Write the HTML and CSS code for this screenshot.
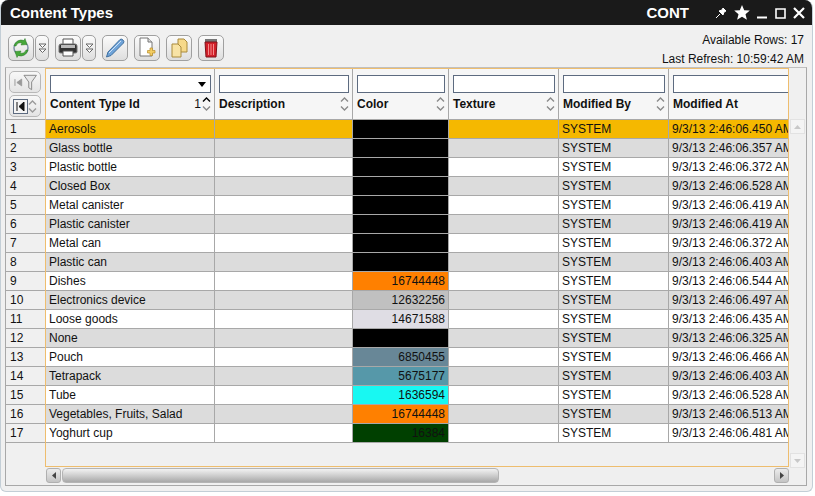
FILE: index.html
```html
<!DOCTYPE html>
<html lang="en">
<head>
    <meta charset="UTF-8">
    <title>Content Types</title>
    <link rel="stylesheet" href="styles.css">
</head>
<body>
    <svg class="defs" width="0" height="0">
        <symbol id="chev-up" viewBox="0 0 9 5"><path d="M1 4.5 4.5 1 8 4.5" fill="none" stroke="currentColor" stroke-width="1.4"/></symbol>
        <symbol id="chev-down" viewBox="0 0 9 5"><path d="M1 .5 4.5 4 8 .5" fill="none" stroke="currentColor" stroke-width="1.4"/></symbol>
        <symbol id="double-down" viewBox="0 0 9 10"><path d="M1 1h7L4.500 4.500zM1 6h7L4.500 9.500z" fill="#fff" stroke="#666"/></symbol>
    </svg>

    <div class="window">
        <!-- Title bar -->
        <div class="titlebar">
            <span class="title">Content Types</span>
            <span class="title-code">CONT</span>
            <div class="window-icons">
                <svg width="12" height="12" viewBox="0 0 12 12"><path d="M1 11 5 7M4 4l4 4 1-3 2-1-3-3-1 2z" fill="#fff" stroke="#fff"/></svg>
                <svg width="16" height="15" viewBox="0 0 16 15"><path d="M8 0l2.200 5.200 5.600.4-4.300 3.600 1.400 5.500L8 11.700l-4.900 3 1.400-5.500L.2 5.600l5.600-.4z" fill="#fff"/></svg>
                <svg width="11" height="12" viewBox="0 0 11 12"><path d="M0 9.500h10v2H0z" fill="#fff"/></svg>
                <svg width="11" height="12" viewBox="0 0 11 12"><path d="M1 2h9v9H1z" fill="none" stroke="#fff" stroke-width="1.600"/></svg>
                <svg width="12" height="12" viewBox="0 0 12 12"><path d="M1 1l10 10M11 1 1 11" fill="none" stroke="#fff" stroke-width="2.200"/></svg>
            </div>
        </div>

        <!-- Toolbar -->
        <div class="toolbar">
            <div class="tool-buttons">
                <button class="tool">
                    <svg width="22" height="22" viewBox="0 0 22 22"><circle cx="11" cy="11" r="7" fill="none" stroke="#7d8fa6" stroke-width="1.500"/><path d="M4 9a7.500 7.500 0 0 1 10-5.500l1-2 2 6-6 .5 1-2a5 5 0 0 0-6 3z" fill="#46a83a" stroke="#2a7a24" stroke-width=".5"/><path d="M18 13a7.500 7.500 0 0 1-10 5.500l-1 2-2-6 6-.5-1 2a5 5 0 0 0 6-3z" fill="#46a83a" stroke="#2a7a24" stroke-width=".5"/></svg>
                </button>
                <button class="tool-more"><svg width="9" height="10"><use href="#double-down"/></svg></button>
                <button class="tool tool-gap">
                    <svg width="22" height="20" viewBox="0 0 22 20"><path d="M6 1h10v6H6z" fill="#fff" stroke="#555"/><path d="M2 8q0-2 2-2h14q2 0 2 2v6q0 1-2 1H4q-2 0-2-1z" fill="#333" stroke="#777"/><path d="M4 7h14v3H4z" fill="#bbb"/><path d="M6 13h10v5H6z" fill="#fff" stroke="#555"/></svg>
                </button>
                <button class="tool-more"><svg width="9" height="10"><use href="#double-down"/></svg></button>
                <button class="tool tool-gap">
                    <svg width="22" height="22" viewBox="0 0 22 22"><path d="M4 15 16 2.500q1.500-1 3 .5t.5 3L7 18.500l-4.500 1.500z" fill="#6fa3d8" stroke="#3f6f9f"/><path d="M5 16 17 4" stroke="#cfe2f5" fill="none"/></svg>
                </button>
                <button class="tool tool-gap">
                    <svg width="20" height="22" viewBox="0 0 20 22"><path d="M3 1h8l4 4v14H3z" fill="#fff" stroke="#777"/><path d="M11 1v4h4" fill="#ddd" stroke="#777"/><path d="M13 11h2.500v2.500H18V16h-2.500v2.500H13V16h-2.500v-2.500H13z" fill="#f3cd63" stroke="#b98e2a" stroke-width=".7"/></svg>
                </button>
                <button class="tool tool-gap">
                    <svg width="20" height="20" viewBox="0 0 20 20"><path d="M9 1h6l3 3v10H9z" fill="#f6d98a" stroke="#a98a3d"/><path d="M3 6h6l3 3v10H3z" fill="#f8e3a5" stroke="#a98a3d"/></svg>
                </button>
                <button class="tool tool-gap">
                    <svg width="18" height="22" viewBox="0 0 18 22"><path d="M3 2h12v3H3z" fill="#777"/><path d="M3 5h12l-1 15H4z" fill="#d2202a" stroke="#7d1118"/><path d="M6.500 7v11M9 7v11M11.500 7v11" stroke="#f58a8a" fill="none"/></svg>
                </button>
            </div>
            <div class="status">
                <div>Available Rows: 17</div>
                <div>Last Refresh: 10:59:42 AM</div>
            </div>
        </div>

        <!-- Grid -->
        <div class="grid">
            <div class="index-col">
                <div class="index-head">
                    <div class="index-btn">
                        <svg width="9" height="9" viewBox="0 0 9 9"><path d="M1 1v7M8 1v7L3 4.500z" fill="#999" stroke="#999"/></svg>
                        <svg width="15" height="17" viewBox="0 0 15 17"><path d="M1 1h13L9 8v8l-3-2V8z" fill="#e8e8e8" stroke="#888"/></svg>
                    </div>
                    <div class="index-btn">
                        <span class="first-box"><svg width="9" height="9" viewBox="0 0 9 9"><path d="M1 0v9M8 0v9L3 4.500z" fill="#111" stroke="#111"/></svg></span>
                        <span class="sort sort-light"><svg width="9" height="5"><use href="#chev-up"/></svg><svg width="9" height="5"><use href="#chev-down"/></svg></span>
                    </div>
                </div>
                <div class="index-cell">1</div>
                <div class="index-cell">2</div>
                <div class="index-cell">3</div>
                <div class="index-cell">4</div>
                <div class="index-cell">5</div>
                <div class="index-cell">6</div>
                <div class="index-cell">7</div>
                <div class="index-cell">8</div>
                <div class="index-cell">9</div>
                <div class="index-cell">10</div>
                <div class="index-cell">11</div>
                <div class="index-cell">12</div>
                <div class="index-cell">13</div>
                <div class="index-cell">14</div>
                <div class="index-cell">15</div>
                <div class="index-cell">16</div>
                <div class="index-cell">17</div>
            </div>

            <div class="data">
                <table>
                    <colgroup>
                        <col class="c-id"><col class="c-desc"><col class="c-color"><col class="c-texture"><col class="c-by"><col class="c-at">
                    </colgroup>
                    <thead>
                        <tr>
                            <th>
                                <div class="filter-box"><i class="caret"></i></div>
                                <div class="head-label">Content Type Id<span class="sort-num">1</span><span class="sort sort-active"><svg width="9" height="5"><use href="#chev-up"/></svg><svg width="9" height="5" class="dim"><use href="#chev-down"/></svg></span></div>
                            </th>
                            <th>
                                <div class="filter-box"></div>
                                <div class="head-label">Description<span class="sort"><svg width="9" height="5"><use href="#chev-up"/></svg><svg width="9" height="5"><use href="#chev-down"/></svg></span></div>
                            </th>
                            <th>
                                <div class="filter-box"></div>
                                <div class="head-label">Color<span class="sort"><svg width="9" height="5"><use href="#chev-up"/></svg><svg width="9" height="5"><use href="#chev-down"/></svg></span></div>
                            </th>
                            <th>
                                <div class="filter-box"></div>
                                <div class="head-label">Texture<span class="sort"><svg width="9" height="5"><use href="#chev-up"/></svg><svg width="9" height="5"><use href="#chev-down"/></svg></span></div>
                            </th>
                            <th>
                                <div class="filter-box"></div>
                                <div class="head-label">Modified By<span class="sort"><svg width="9" height="5"><use href="#chev-up"/></svg><svg width="9" height="5"><use href="#chev-down"/></svg></span></div>
                            </th>
                            <th>
                                <div class="filter-box"></div>
                                <div class="head-label">Modified At</div>
                            </th>
                        </tr>
                    </thead>
                    <tbody>
                        <tr class="selected"><td>Aerosols</td><td></td><td class="swatch black"></td><td></td><td>SYSTEM</td><td>9/3/13 2:46:06.450 AM</td></tr>
                        <tr><td>Glass bottle</td><td></td><td class="swatch black"></td><td></td><td>SYSTEM</td><td>9/3/13 2:46:06.357 AM</td></tr>
                        <tr><td>Plastic bottle</td><td></td><td class="swatch black"></td><td></td><td>SYSTEM</td><td>9/3/13 2:46:06.372 AM</td></tr>
                        <tr><td>Closed Box</td><td></td><td class="swatch black"></td><td></td><td>SYSTEM</td><td>9/3/13 2:46:06.528 AM</td></tr>
                        <tr><td>Metal canister</td><td></td><td class="swatch black"></td><td></td><td>SYSTEM</td><td>9/3/13 2:46:06.419 AM</td></tr>
                        <tr><td>Plastic canister</td><td></td><td class="swatch black"></td><td></td><td>SYSTEM</td><td>9/3/13 2:46:06.419 AM</td></tr>
                        <tr><td>Metal can</td><td></td><td class="swatch black"></td><td></td><td>SYSTEM</td><td>9/3/13 2:46:06.372 AM</td></tr>
                        <tr><td>Plastic can</td><td></td><td class="swatch black"></td><td></td><td>SYSTEM</td><td>9/3/13 2:46:06.403 AM</td></tr>
                        <tr><td>Dishes</td><td></td><td class="swatch orange">16744448</td><td></td><td>SYSTEM</td><td>9/3/13 2:46:06.544 AM</td></tr>
                        <tr><td>Electronics device</td><td></td><td class="swatch silver">12632256</td><td></td><td>SYSTEM</td><td>9/3/13 2:46:06.497 AM</td></tr>
                        <tr><td>Loose goods</td><td></td><td class="swatch lilac">14671588</td><td></td><td>SYSTEM</td><td>9/3/13 2:46:06.435 AM</td></tr>
                        <tr><td>None</td><td></td><td class="swatch black"></td><td></td><td>SYSTEM</td><td>9/3/13 2:46:06.325 AM</td></tr>
                        <tr><td>Pouch</td><td></td><td class="swatch slate">6850455</td><td></td><td>SYSTEM</td><td>9/3/13 2:46:06.466 AM</td></tr>
                        <tr><td>Tetrapack</td><td></td><td class="swatch steel">5675177</td><td></td><td>SYSTEM</td><td>9/3/13 2:46:06.403 AM</td></tr>
                        <tr><td>Tube</td><td></td><td class="swatch cyan">1636594</td><td></td><td>SYSTEM</td><td>9/3/13 2:46:06.528 AM</td></tr>
                        <tr><td>Vegetables, Fruits, Salad</td><td></td><td class="swatch orange">16744448</td><td></td><td>SYSTEM</td><td>9/3/13 2:46:06.513 AM</td></tr>
                        <tr><td>Yoghurt cup</td><td></td><td class="swatch green">16384</td><td></td><td>SYSTEM</td><td>9/3/13 2:46:06.481 AM</td></tr>
                    </tbody>
                </table>
            </div>

            <div class="vscroll">
                <div class="v-btn"><svg width="7" height="4" viewBox="0 0 7 4"><path d="M0 4 3.500 0 7 4z" fill="#c8c8c8"/></svg></div>
                <div class="v-btn"><svg width="7" height="4" viewBox="0 0 7 4"><path d="M0 0h7L3.500 4z" fill="#c8c8c8"/></svg></div>
            </div>

            <div class="hscroll">
                <div class="h-btn"><svg width="4" height="7" viewBox="0 0 4 7"><path d="M4 0v7L0 3.500z" fill="#444"/></svg></div>
                <div class="h-track"><div class="h-thumb"></div></div>
                <div class="h-btn"><svg width="4" height="7" viewBox="0 0 4 7"><path d="M0 0v7l4-3.500z" fill="#444"/></svg></div>
            </div>
        </div>
    </div>
</body>
</html>
```

FILE: styles.css
```css
* {
    box-sizing: border-box;
}

body {
    margin: 0;
    background: #fff;
    font-family: "Liberation Sans", Arial, sans-serif;
    font-size: 12px;
    color: #111;
}

.defs {
    display: block;
    height: 0;
}

.window {
    width: 813px;
    height: 492px;
    display: flex;
    flex-direction: column;
    background: #f0f0f0;
    border: 1px solid #c3ced6;
    border-top: 0;
    border-radius: 8px 8px 6px 6px;
    overflow: hidden;
}

/* Title bar */
.titlebar {
    flex: none;
    height: 25px;
    margin: 0 -1px;
    padding: 0 8px 0 10px;
    display: flex;
    align-items: center;
    background: #1a1a1a;
    color: #fff;
    font-weight: bold;
    font-size: 15px;
}

.title {
    flex: 1;
}

.title-code {
    margin-right: 26px;
}

.window-icons {
    display: flex;
    align-items: center;
    gap: 7px;
}

/* Toolbar */
.toolbar {
    flex: none;
    height: 42px;
    padding: 6px 8px 0 7px;
    display: flex;
    justify-content: space-between;
}

.tool-buttons {
    display: flex;
    align-items: flex-start;
    padding-top: 4px;
    gap: 1px;
}

.tool,
.tool-more {
    height: 26px;
    padding: 0;
    display: flex;
    align-items: center;
    justify-content: center;
    border: 1px solid #a0a0a0;
    border-radius: 5px;
    background: linear-gradient(#fbfbfb, #dedede);
}

.tool {
    width: 26px;
}

.tool-more {
    width: 14px;
}

.tool-gap {
    margin-left: 5px;
}

.status {
    text-align: right;
    line-height: 19px;
    font-size: 12px;
}

/* Grid */
.grid {
    flex: none;
    width: 802px;
    height: 419px;
    margin-left: 4px;
    display: grid;
    grid-template-columns: 39px 744px 17px;
    grid-template-rows: 400px 17px;
    border: 1px solid #a8a8a8;
    border-top-color: #c0c0c0;
}

.index-col {
    grid-row: 1 / 3;
}

.index-head {
    height: 52px;
    padding: 3px 3px 0 3px;
    display: flex;
    flex-direction: column;
    gap: 2px;
    border-bottom: 1px solid #a8a8a8;
}

.index-btn {
    width: 32px;
    height: 22px;
    display: flex;
    align-items: center;
    justify-content: space-between;
    padding: 0 3px 0 4px;
    border: 1px solid #b8b8b8;
    border-radius: 5px;
    background: linear-gradient(#f8f8f8, #e4e4e4);
}

.first-box {
    width: 15px;
    height: 15px;
    display: flex;
    align-items: center;
    justify-content: center;
    margin-left: -1px;
    border: 1px solid #5d6b80;
    background: #f4f4f4;
}

.index-cell {
    height: 19px;
    padding-left: 4px;
    line-height: 18px;
    border-bottom: 1px solid #a8a8a8;
}

.data {
    overflow: hidden;
    border: 1px solid #eebd6e;
    margin-bottom: 1px;
}

table {
    width: 823px;
    table-layout: fixed;
    border-collapse: separate;
    border-spacing: 0;
}

.c-id { width: 169px; }
.c-desc { width: 138px; }
.c-color { width: 96px; }
.c-texture { width: 110px; }
.c-by { width: 110px; }
.c-at { width: 200px; }

th {
    height: 51px;
    padding: 6px 3px 0 4px;
    text-align: left;
    vertical-align: top;
    background: #f6f6f6;
    border-right: 1px solid #a8a8a8;
    border-bottom: 1px solid #a8a8a8;
}

td {
    height: 19px;
    padding: 0 3px;
    line-height: 18px;
    white-space: nowrap;
    overflow: hidden;
    background: #fff;
    border-right: 1px solid #a8a8a8;
    border-bottom: 1px solid #a8a8a8;
}

tbody tr:nth-child(even) td {
    background: #dcdcdc;
}

tbody tr.selected td {
    background: #f5b800;
}

.filter-box {
    position: relative;
    height: 18px;
    background: #fff;
    border: 1px solid #5d6b80;
}

.caret {
    position: absolute;
    right: 4px;
    top: 6px;
    border: 4px solid transparent;
    border-top: 5px solid #000;
    border-bottom: 0;
}

.head-label {
    height: 22px;
    display: flex;
    align-items: center;
    font-size: 12px;
    font-weight: bold;
}

.sort {
    margin-left: auto;
    display: flex;
    flex-direction: column;
    gap: 4px;
    color: #8a8a8a;
}

.sort svg {
    display: block;
}

.sort-light {
    margin-left: 0;
    gap: 3px;
    color: #9a9a9a;
}

.sort-num {
    margin-left: auto;
    font-weight: normal;
}

.sort-active {
    margin-left: 1px;
    color: #000;
}

.sort-active .dim {
    color: #8a8a8a;
}

td.swatch,
tbody tr:nth-child(even) td.swatch {
    text-align: right;
}

tbody tr td.black,
tbody tr:nth-child(even) td.black { background: #000; }
tbody tr td.orange,
tbody tr:nth-child(even) td.orange { background: #ff8000; }
tbody tr td.silver,
tbody tr:nth-child(even) td.silver { background: #c0c0c0; }
tbody tr td.lilac,
tbody tr:nth-child(even) td.lilac { background: #dfdde4; }
tbody tr td.slate,
tbody tr:nth-child(even) td.slate { background: #688797; }
tbody tr td.steel,
tbody tr:nth-child(even) td.steel { background: #5698a9; }
tbody tr td.cyan,
tbody tr:nth-child(even) td.cyan { background: #18f8f2; }
tbody tr td.green,
tbody tr:nth-child(even) td.green { background: #004000; }

/* Scrollbars */
.vscroll {
    padding: 51px 1px 0 1px;
    display: flex;
    flex-direction: column;
    justify-content: space-between;
}

.v-btn {
    width: 15px;
    height: 15px;
    display: flex;
    align-items: center;
    justify-content: center;
    background: #f4f4f4;
    border: 1px solid #e2e2e2;
}

.hscroll {
    grid-column: 2;
    padding: 0 0 2px 1px;
    display: flex;
    gap: 1px;
}

.h-btn {
    flex: none;
    width: 15px;
    height: 15px;
    display: flex;
    align-items: center;
    justify-content: center;
    border: 1px solid #b0b0b0;
    border-radius: 3px;
    background: linear-gradient(#ececec, #c4c4c4);
}

.h-track {
    flex: 1;
    background: #efefef;
}

.h-thumb {
    width: 437px;
    height: 15px;
    border: 1px solid #b4b4b4;
    border-radius: 4px;
    background: linear-gradient(#f2f2f2, #d2d2d2 45%, #a8a8a8);
}
```
